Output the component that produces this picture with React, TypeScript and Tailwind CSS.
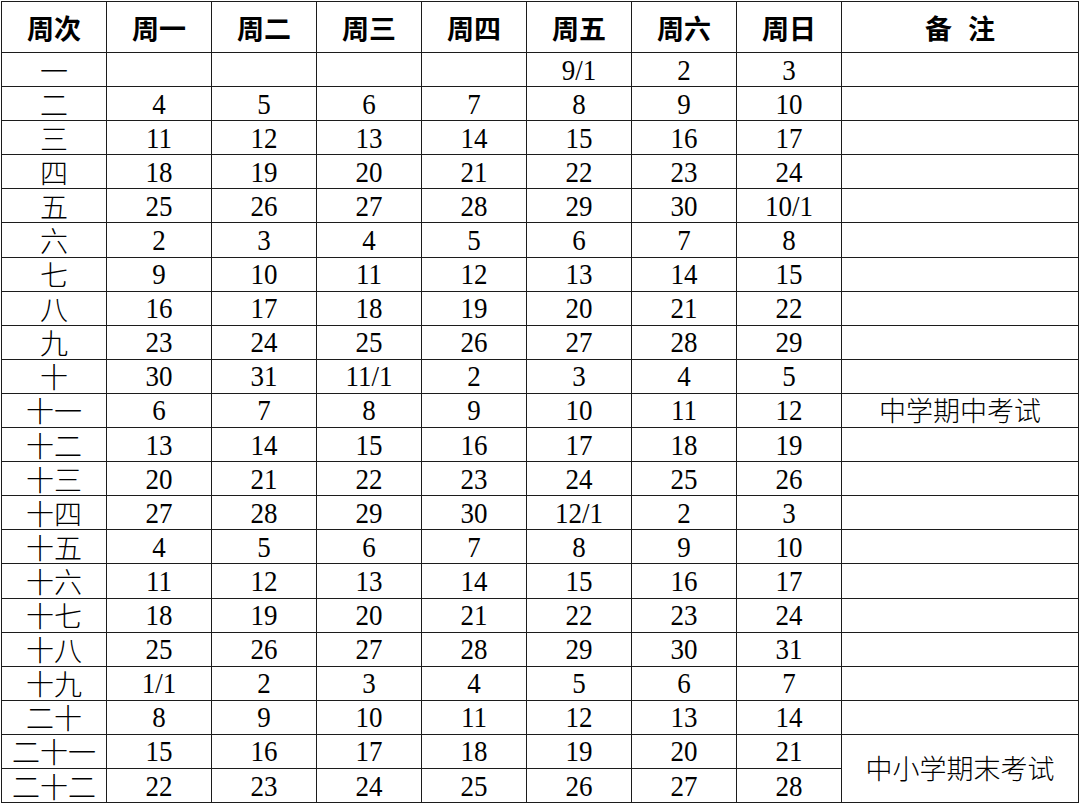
const headers = ["周次", "周一", "周二", "周三", "周四", "周五", "周六", "周日"]

const rows: { week: string; days: string[]; note?: string; noteSpan?: number; skipNote?: boolean }[] = [
  { week: "一", days: ["", "", "", "", "9/1", "2", "3"] },
  { week: "二", days: ["4", "5", "6", "7", "8", "9", "10"] },
  { week: "三", days: ["11", "12", "13", "14", "15", "16", "17"] },
  { week: "四", days: ["18", "19", "20", "21", "22", "23", "24"] },
  { week: "五", days: ["25", "26", "27", "28", "29", "30", "10/1"] },
  { week: "六", days: ["2", "3", "4", "5", "6", "7", "8"] },
  { week: "七", days: ["9", "10", "11", "12", "13", "14", "15"] },
  { week: "八", days: ["16", "17", "18", "19", "20", "21", "22"] },
  { week: "九", days: ["23", "24", "25", "26", "27", "28", "29"] },
  { week: "十", days: ["30", "31", "11/1", "2", "3", "4", "5"] },
  { week: "十一", days: ["6", "7", "8", "9", "10", "11", "12"], note: "中学期中考试" },
  { week: "十二", days: ["13", "14", "15", "16", "17", "18", "19"] },
  { week: "十三", days: ["20", "21", "22", "23", "24", "25", "26"] },
  { week: "十四", days: ["27", "28", "29", "30", "12/1", "2", "3"] },
  { week: "十五", days: ["4", "5", "6", "7", "8", "9", "10"] },
  { week: "十六", days: ["11", "12", "13", "14", "15", "16", "17"] },
  { week: "十七", days: ["18", "19", "20", "21", "22", "23", "24"] },
  { week: "十八", days: ["25", "26", "27", "28", "29", "30", "31"] },
  { week: "十九", days: ["1/1", "2", "3", "4", "5", "6", "7"] },
  { week: "二十", days: ["8", "9", "10", "11", "12", "13", "14"] },
  { week: "二十一", days: ["15", "16", "17", "18", "19", "20", "21"], note: "中小学期末考试", noteSpan: 2 },
  { week: "二十二", days: ["22", "23", "24", "25", "26", "27", "28"], skipNote: true },
]

export default function App() {
  return (
    <div className="w-[1080px] h-[805px] bg-white overflow-hidden pt-px pl-px">
      <table className="border-collapse table-fixed w-[1077px] text-black">
        <colgroup>
          {headers.map((h) => (
            <col key={h} className="w-[105px]" />
          ))}
          <col className="w-[237px]" />
        </colgroup>
        <thead>
          <tr className="h-[51px]">
            {headers.map((h) => (
              <th
                key={h}
                className="border-[1.5px] border-[#1c1c1c] p-0 text-center align-middle text-[27px] font-bold leading-none font-['Noto_Sans_CJK_SC',sans-serif]"
              >
                {h}
              </th>
            ))}
            <th className="border-[1.5px] border-[#1c1c1c] p-0 text-center align-middle text-[27px] font-bold leading-none font-['Noto_Sans_CJK_SC',sans-serif]">
              备<span className="ml-4">注</span>
            </th>
          </tr>
        </thead>
        <tbody>
          {rows.map((row) => (
            <tr key={row.week} className="h-[34.1px]">
              <td className="border-[1.5px] border-[#1c1c1c] p-0 text-center align-middle text-[28px] font-light leading-[28px] whitespace-nowrap font-['Noto_Sans_CJK_SC',sans-serif]">
                <span className="inline-block h-[28px] overflow-visible">{row.week}</span>
              </td>
              {row.days.map((d, i) => (
                <td
                  key={i}
                  className="border-[1.5px] border-[#1c1c1c] p-0 text-center align-middle text-[27px] leading-[30px] font-['Liberation_Serif',serif]"
                >
                  <span className="inline-block scale-y-[1.12]">{d}</span>
                </td>
              ))}
              {!row.skipNote && (
                <td
                  rowSpan={row.noteSpan ?? 1}
                  className="border-[1.5px] border-[#1c1c1c] p-0 text-center align-middle text-[27px] font-light leading-[30px] whitespace-nowrap font-['Noto_Sans_CJK_SC',sans-serif]"
                >
                  {row.note ?? ""}
                </td>
              )}
            </tr>
          ))}
        </tbody>
      </table>
    </div>
  )
}
